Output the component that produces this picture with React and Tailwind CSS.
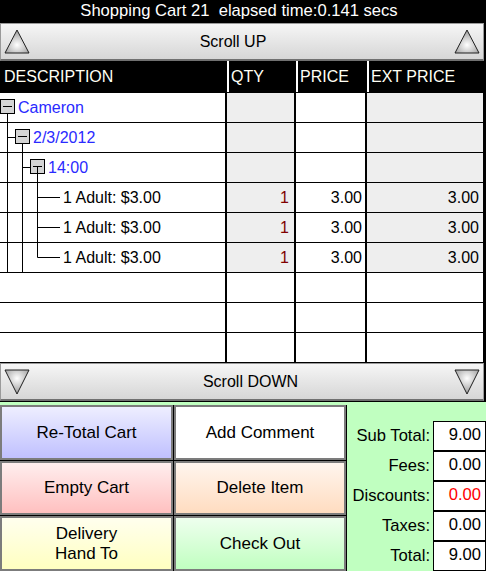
const rows = [
  { level: 0, label: 'Cameron' },
  { level: 1, label: '2/3/2012' },
  { level: 2, label: '14:00' },
  { level: 3, label: '1 Adult: $3.00', qty: '1', price: '3.00', ext: '3.00' },
  { level: 3, label: '1 Adult: $3.00', qty: '1', price: '3.00', ext: '3.00' },
  { level: 3, label: '1 Adult: $3.00', qty: '1', price: '3.00', ext: '3.00', last: true },
  {},
  {},
  {},
];

const Triangle = ({ down }) => (
  <svg width="26" height="26" viewBox="0 0 26 26">
    <defs>
      <radialGradient id={down ? 'tgd' : 'tgu'} cx="50%" cy={down ? '35%' : '65%'} r="60%">
        <stop offset="0%" stopColor="#ffffff" />
        <stop offset="100%" stopColor="#a0a0a0" />
      </radialGradient>
    </defs>
    {down ? (
      <polygon points="1,1 25,1 13,25" fill={`url(#tgd)`} stroke="#202020" strokeWidth="1" />
    ) : (
      <polygon points="13,1 25,24 1,24" fill={`url(#tgu)`} stroke="#202020" strokeWidth="1" />
    )}
  </svg>
);

const ScrollBar = ({ label, down }) => (
  <div className="w-[484px] h-[38px] flex items-center px-[3px] bg-gradient-to-b from-[#f6f6f6] to-[#d6d6d6] border border-[#9a9a9a] border-b-[2px] border-b-[#707070]">
    <Triangle down={down} />
    <span className={`flex-1 text-center text-[16px] text-black ${down ? 'pl-[17px]' : 'pr-[18px]'}`}>{label}</span>
    <Triangle down={down} />
  </div>
);

// tree connectors for the description column
const Tree = ({ level, last }) => {
  const box = (x) => (
    <g>
      <rect x={x + 0.5} y="7.5" width="14" height="14" fill="#d4d4d4" stroke="#000" />
      <line x1={x + 3} y1="14.5" x2={x + 12} y2="14.5" stroke="#000" />
    </g>
  );
  const w = level === 3 ? 62 : 15 * (level + 1) + 2;
  return (
    <svg width={w} height="30" className="shrink-0 -mt-[1px]">
      {level === 0 && (
        <>
          <line x1="7.5" y1="22" x2="7.5" y2="30" stroke="#000" />
          {box(0)}
        </>
      )}
      {level === 1 && (
        <>
          <line x1="7.5" y1="0" x2="7.5" y2="30" stroke="#000" />
          <line x1="7.5" y1="15.5" x2="15" y2="15.5" stroke="#000" />
          <line x1="22.5" y1="22" x2="22.5" y2="30" stroke="#000" />
          {box(15)}
        </>
      )}
      {level === 2 && (
        <>
          <line x1="7.5" y1="0" x2="7.5" y2="30" stroke="#000" />
          <line x1="22.5" y1="0" x2="22.5" y2="30" stroke="#000" />
          <line x1="22.5" y1="15.5" x2="30" y2="15.5" stroke="#000" />
          {box(30)}
          <line x1="37.5" y1="14.5" x2="37.5" y2="30" stroke="#000" />
        </>
      )}
      {level === 3 && (
        <>
          <line x1="7.5" y1="0" x2="7.5" y2="30" stroke="#000" />
          <line x1="22.5" y1="0" x2="22.5" y2="30" stroke="#000" />
          <line x1="37.5" y1="0" x2="37.5" y2={last ? 15.5 : 30} stroke="#000" />
          <line x1="37.5" y1="15.5" x2="60" y2="15.5" stroke="#000" />
        </>
      )}
    </svg>
  );
};

const Button = ({ children, className }) => (
  <div className={`flex items-center justify-center text-center text-[17px] leading-[20px] text-black border-2 border-[#7c7c7c] ${className}`}>
    {children}
  </div>
);

const totals = [
  ['Sub Total:', '9.00'],
  ['Fees:', '0.00'],
  ['Discounts:', '0.00', true],
  ['Taxes:', '0.00'],
  ['Total:', '9.00'],
];

export default function App() {
  return (
    <div className="w-[486px] h-[571px] bg-black overflow-hidden font-['Liberation_Sans',Arial,sans-serif]">
      <div className="h-[23px] text-white text-[16.6px] leading-[22px] text-center whitespace-pre pr-[8px]">
        Shopping Cart 21  elapsed time:0.141 secs
      </div>

      <ScrollBar label="Scroll UP" />

      {/* header */}
      <div className="flex h-[31px] w-[484px] text-[16px] text-[#fffff4] items-center">
        <div className="w-[227px] pl-[4px]">DESCRIPTION</div>
        <div className="w-[69px] h-full flex items-center border-l-2 border-white pl-[2px]">QTY</div>
        <div className="w-[71px] h-full flex items-center border-l-2 border-white pl-[2px]">PRICE</div>
        <div className="w-[117px] h-full flex items-center border-l-2 border-white pl-[2px]">EXT PRICE</div>
      </div>

      {/* cart rows */}
      <div className="w-[484px] flex flex-col gap-[1px] py-[1px]">
        {rows.map((r, i) => {
          const filled = r.label !== undefined;
          return (
            <div key={i} className="flex h-[29px] pl-[1px] gap-[2px] text-[16px]">
              <div className="w-[225px] bg-white flex items-center -ml-[1px] pl-0 overflow-visible">
                {filled && <Tree level={r.level} last={r.last} />}
                {filled && (
                  <span className={r.level === 3 ? 'text-black ml-[1px]' : 'text-[#2a2aff] ml-[1px]'}>{r.label}</span>
                )}
              </div>
              <div className={`w-[67px] flex items-center justify-end pr-[5px] text-[#800000] ${filled ? 'bg-[#eeeeee]' : 'bg-white'}`}>
                {r.qty}
              </div>
              <div className="w-[69px] bg-white flex items-center justify-end pr-[3px] text-black">{r.price}</div>
              <div className={`w-[116px] flex items-center justify-end pr-[4px] text-black ${filled ? 'bg-[#eeeeee]' : 'bg-white'}`}>
                {r.ext}
              </div>
            </div>
          );
        })}
      </div>

      <ScrollBar label="Scroll DOWN" down />

      {/* bottom panel */}
      <div className="h-[170px] border-t border-black bg-[#c0ffc0] pt-[3px] flex">
        <div className="grid grid-cols-[173px_172px] grid-rows-[55px_54px_55px] gap-[1px] bg-black pr-[1px] pb-[1px] h-[166px]">
          <Button className="bg-gradient-to-b from-[#eeeeff] to-[#c0c0ff]">Re-Total Cart</Button>
          <Button className="bg-white">Add Comment</Button>
          <Button className="bg-gradient-to-b from-[#ffeeee] to-[#ffc0c0]">Empty Cart</Button>
          <Button className="bg-gradient-to-b from-[#fff5ee] to-[#ffdcc0]">Delete Item</Button>
          <Button className="bg-gradient-to-b from-[#ffffee] to-[#ffffc0]">
            Delivery
            <br />
            Hand To
          </Button>
          <Button className="bg-gradient-to-b from-[#eeffee] to-[#c0ffc0]">Check Out</Button>
        </div>
        <div className="flex-1 flex flex-col pt-[16px] text-[16.6px]">
          {totals.map(([label, value, red]) => (
            <div key={label} className="flex h-[30px] items-center">
              <div className="flex-1 text-right pr-[3px] text-black">{label}</div>
              <div
                className={`w-[53px] h-[30px] flex items-center justify-end pr-[4px] bg-white border border-black -mt-[1px] ${
                  red ? 'text-[#ff0000]' : 'text-black'
                }`}
              >
                {value}
              </div>
            </div>
          ))}
        </div>
      </div>
    </div>
  );
}
